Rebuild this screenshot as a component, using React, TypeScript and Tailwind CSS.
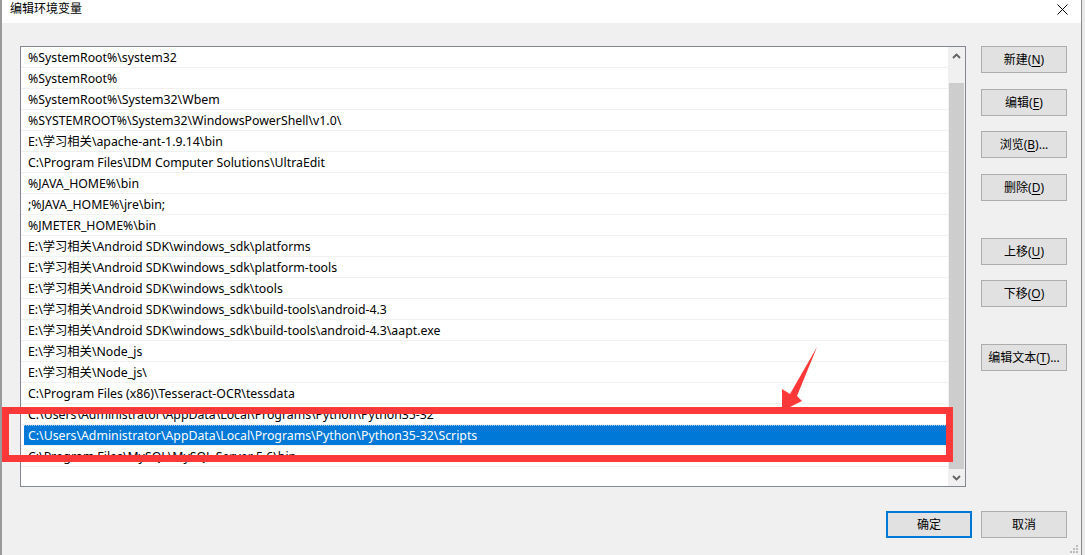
import React from "react";

const rows: string[] = [
  "%SystemRoot%\\system32",
  "%SystemRoot%",
  "%SystemRoot%\\System32\\Wbem",
  "%SYSTEMROOT%\\System32\\WindowsPowerShell\\v1.0\\",
  "E:\\学习相关\\apache-ant-1.9.14\\bin",
  "C:\\Program Files\\IDM Computer Solutions\\UltraEdit",
  "%JAVA_HOME%\\bin",
  ";%JAVA_HOME%\\jre\\bin;",
  "%JMETER_HOME%\\bin",
  "E:\\学习相关\\Android SDK\\windows_sdk\\platforms",
  "E:\\学习相关\\Android SDK\\windows_sdk\\platform-tools",
  "E:\\学习相关\\Android SDK\\windows_sdk\\tools",
  "E:\\学习相关\\Android SDK\\windows_sdk\\build-tools\\android-4.3",
  "E:\\学习相关\\Android SDK\\windows_sdk\\build-tools\\android-4.3\\aapt.exe",
  "E:\\学习相关\\Node_js",
  "E:\\学习相关\\Node_js\\",
  "C:\\Program Files (x86)\\Tesseract-OCR\\tessdata",
  "C:\\Users\\Administrator\\AppData\\Local\\Programs\\Python\\Python35-32",
  "C:\\Users\\Administrator\\AppData\\Local\\Programs\\Python\\Python35-32\\Scripts",
  "C:\\Program Files\\MySQL\\MySQL Server 5.6\\bin",
];

const SELECTED = 18;

function Btn({ label, k, suffix, primary }: { label: string; k?: string; suffix?: string; primary?: boolean }) {
  return (
    <div
      className={
        "w-[86px] h-[27px] flex items-center justify-center bg-[#e1e1e1] text-[12px] text-black " +
        (primary ? "border-2 border-[#0078d7]" : "border border-[#adadad]")
      }
    >
      <span>
        {label}
        {k ? (
          <>
            (<span className="underline underline-offset-2">{k}</span>)
          </>
        ) : null}
        {suffix}
      </span>
    </div>
  );
}

function Chevron({ up }: { up?: boolean }) {
  return (
    <svg width="9" height="6" viewBox="0 0 9 6">
      <polyline
        points={up ? "1,5 4.5,1.5 8,5" : "1,1 4.5,4.5 8,1"}
        fill="none"
        stroke="#606060"
        strokeWidth="1.8"
      />
    </svg>
  );
}

export default function App() {
  return (
    <div
      className="relative w-[1085px] h-[555px] overflow-hidden flex bg-[#e9e9e9]"
      style={{ fontFamily: '"Noto Sans", "Noto Sans CJK SC", sans-serif' }}
    >
      <div className="w-[1082px] h-full flex flex-col border-l-2 border-r border-l-[#9a9a9a] border-r-[#8a8a8a]">
        {/* Title bar */}
        <div className="h-[23px] bg-white flex items-start justify-between pl-[8px] pr-[13px] pt-[2px]">
          <span className="text-[12px] text-black leading-[14px]">编辑环境变量</span>
          <svg width="11" height="11" viewBox="0 0 11 11" className="mt-[2px]">
            <path d="M0.5 0.5 L10.5 10.5 M10.5 0.5 L0.5 10.5" stroke="#000" strokeWidth="1" />
          </svg>
        </div>
        {/* Body */}
        <div className="flex-1 bg-[#f0f0f0] flex flex-col pt-[23px] pl-[18px]">
          <div className="flex gap-[15px]">
            {/* List box */}
            <div className="w-[946px] h-[441px] border border-[#828790] bg-white flex">
              <div className="flex-1 flex flex-col">
                {rows.map((r, i) => (
                  <div key={i} className="h-[21px] border-b border-[#f0f0f0] flex items-stretch pl-[3px] pr-[1px]">
                    <div
                      className={
                        "flex-1 flex items-center pl-[4px] pt-[2px] text-[12.3px] leading-none whitespace-nowrap " +
                        (i === SELECTED
                          ? "bg-[#0078d7] text-white border-t border-dotted border-[#9ccbf0]"
                          : "text-black")
                      }
                    >
                      {r}
                    </div>
                  </div>
                ))}
              </div>
              {/* Scrollbar */}
              <div className="w-[17px] bg-[#f0f0f0] flex flex-col">
                <div className="h-[17px] flex items-center justify-center">
                  <Chevron up />
                </div>
                <div className="h-[19px]" />
                <div className="flex-1 bg-[#cdcdcd] mx-[1px]" />
                <div className="h-[17px] flex items-center justify-center">
                  <Chevron />
                </div>
              </div>
            </div>
            {/* Buttons column */}
            <div className="flex flex-col">
              <Btn label="新建" k="N" />
              <div className="h-[16px]" />
              <Btn label="编辑" k="E" />
              <div className="h-[15px]" />
              <Btn label="浏览" k="B" suffix="..." />
              <div className="h-[16px]" />
              <Btn label="删除" k="D" />
              <div className="h-[37px]" />
              <Btn label="上移" k="U" />
              <div className="h-[15px]" />
              <Btn label="下移" k="O" />
              <div className="h-[37px]" />
              <Btn label="编辑文本" k="T" suffix="..." />
            </div>
          </div>
          <div className="flex justify-end gap-[9px] mt-[24px] pr-[14px]">
            <Btn label="确定" primary />
            <Btn label="取消" />
          </div>
          <div className="flex-1 flex items-end justify-end pr-[3px] pb-[2px]">
            <svg width="8" height="8" viewBox="0 0 8 8">
              <rect x="6" y="0" width="2" height="2" fill="#bdbdbd" />
              <rect x="3" y="3" width="2" height="2" fill="#bdbdbd" />
              <rect x="6" y="3" width="2" height="2" fill="#bdbdbd" />
              <rect x="0" y="6" width="2" height="2" fill="#bdbdbd" />
              <rect x="3" y="6" width="2" height="2" fill="#bdbdbd" />
              <rect x="6" y="6" width="2" height="2" fill="#bdbdbd" />
            </svg>
          </div>
        </div>
      </div>

      {/* Annotation: red rectangle */}
      <div className="absolute left-[2px] top-[407px] w-[951px] h-[55px] border-[7px] border-[#fc3838] pointer-events-none" />
      {/* Annotation: red arrow */}
      <svg className="absolute left-0 top-0 pointer-events-none" width="1085" height="555">
        <polygon points="817,347 797,396 802,401 782,411 782,389 790,394" fill="#fc3838" />
      </svg>
    </div>
  );
}
